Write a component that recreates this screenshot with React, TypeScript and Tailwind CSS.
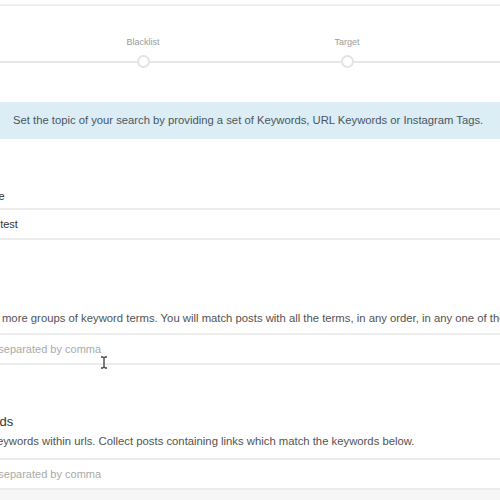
import React from "react";

const font = { fontFamily: '"Liberation Sans", Arial, Helvetica, sans-serif' };

function Step({ label }: { label: string }) {
  return (
    <div className="flex w-[204px] flex-col items-center">
      <div className="h-[12px] text-[9px] leading-[12px] text-[#9a9a9a]">{label}</div>
      <div className="mt-[7px] flex w-full items-center">
        <div className="h-[2px] flex-1 bg-[#e6e6e6]" />
        <div className="h-[13px] w-[13px] rounded-full border-2 border-[#e3e3e3] bg-white" />
        <div className="h-[2px] flex-1 bg-[#e6e6e6]" />
      </div>
    </div>
  );
}

function Field({ value, placeholder }: { value?: string; placeholder?: string }) {
  return (
    <div className="flex h-[32px] items-center border-y-2 border-[#ececec] bg-white pl-[20px] text-[11px]">
      {value ? (
        <span className="text-[#333]">{value}</span>
      ) : (
        <span className="text-[#a9a9a9]">{placeholder}</span>
      )}
    </div>
  );
}

export default function App() {
  return (
    <div className="relative h-[500px] w-[500px] overflow-hidden bg-white" style={font}>
      <div className="h-[4px]" />
      <div className="h-[2px] bg-[#efefef]" />
      <div className="-ml-[163px] mt-[30px] flex w-[816px]">
        <Step label="Keywords" />
        <Step label="Blacklist" />
        <Step label="Target" />
        <Step label="Review" />
      </div>
      <div className="mt-[34px] flex h-[37px] w-[500px] items-center whitespace-nowrap bg-[#dcedf5] pl-[13px] text-[11.25px] text-[#485661]">
        Set the topic of your search by providing a set of Keywords, URL Keywords or Instagram Tags.
      </div>
      <div className="-ml-[73px] w-[640px]">
        <div className="-ml-[5px] mt-[49px] h-[16px] text-[11px] leading-[16px] text-[#333]">Campaign Name</div>
        <div className="mt-[4px]">
          <Field value="Campaign test" />
        </div>

        <div className="mt-[50px] h-[18px] text-[13px] leading-[18px] text-[#333]">Keywords</div>
        <div className="ml-[4px] mt-[2px] h-[16px] whitespace-nowrap text-[11.3px] leading-[16px] text-[#525252]">
          Define one or more groups of keyword terms. You will match posts with all the terms, in any order, in any one of the groups.
        </div>
        <div className="mt-[7px]">
          <Field placeholder="Keywords separated by comma" />
        </div>

        <div className="mt-[48px] h-[18px] text-[13px] leading-[18px] text-[#333]">URL Keywords</div>
        <div className="ml-[9px] mt-[2px] h-[16px] whitespace-nowrap text-[11.3px] leading-[16px] text-[#525252]">
          Search for keywords within urls. Collect posts containing links which match the keywords below.
        </div>
        <div className="mt-[9px]">
          <Field placeholder="Keywords separated by comma" />
        </div>
      </div>
      <div className="h-[20px] bg-[#f6f6f6]" />

      <svg className="absolute left-[100px] top-[356px]" width="8" height="13" viewBox="0 0 8 13">
        <path d="M1 1h2.2M4.8 1H7M4 1.5v10M1 12h2.2M4.8 12H7" stroke="#3a3a3a" strokeWidth="1.3" fill="none" />
        <path d="M3 1.2C3.6 1.2 4 1.5 4 2M5 1.2C4.4 1.2 4 1.5 4 2M3 11.8C3.6 11.8 4 11.5 4 11M5 11.8C4.4 11.8 4 11.5 4 11" stroke="#3a3a3a" strokeWidth="1" fill="none" />
      </svg>
    </div>
  );
}
